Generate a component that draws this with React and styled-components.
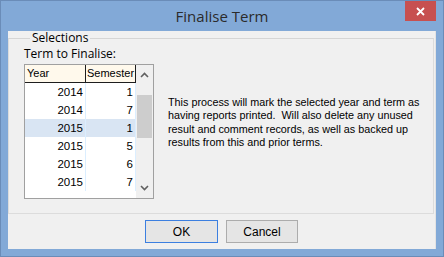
import React from "react";
import styled, { createGlobalStyle } from "styled-components";

const Global = createGlobalStyle`
  html, body {
    margin: 0;
    padding: 0;
    background: #ffffff;
  }
  body {
    font-family: "Liberation Sans", Arial, sans-serif;
    font-size: 11px;
    color: #000;
  }
`;

const Window = styled.div`
  box-sizing: border-box;
  width: 444px;
  height: 257px;
  display: flex;
  flex-direction: column;
  background: #82a9d7;
  border: 1px solid #6a8cb8;
  padding: 0 7px 7px 7px;
`;

const TitleBar = styled.div`
  height: 30px;
  display: grid;
  grid-template-columns: 1fr auto 1fr;
  align-items: start;
`;

const Title = styled.div`
  grid-column: 2;
  font-family: "Open Sans", "Noto Sans", sans-serif;
  font-size: 15px;
  line-height: 30px;
  color: #2b2b2b;
`;

const CloseButton = styled.div`
  grid-column: 3;
  justify-self: end;
  width: 31px;
  height: 20px;
  background: #c75050;
  color: #fff;
  display: flex;
  align-items: center;
  justify-content: center;
`;

const Client = styled.div`
  flex: 1;
  display: flex;
  flex-direction: column;
  background: #f0f0f0;
  border-right: 1px solid #e3e3e3;
`;

const Group = styled.fieldset`
  margin: 0 1px 0 0;
  padding: 1px 0 0 15px;
  height: 183px;
  box-sizing: border-box;
  border: 1px solid #dcdcdc;
  border-top-color: #d5d5d5;
`;

const Legend = styled.legend`
  padding: 0 2px;
  margin-left: 6px;
  font-family: "Open Sans", "Noto Sans", sans-serif;
  font-size: 12px;
  line-height: 14px;
`;

const Label = styled.div`
  font-family: "Open Sans", "Noto Sans", sans-serif;
  font-size: 12px;
  line-height: 14px;
  margin: 1px 0 3px 0;
`;

const Row = styled.div`
  display: flex;
  align-items: flex-start;
  gap: 13px;
`;

const ListBox = styled.div`
  width: 130px;
  height: 135px;
  box-sizing: border-box;
  border: 1px solid #a0a0a0;
  background: #fff;
  display: flex;
`;

const Grid = styled.div`
  width: 111px;
  display: flex;
  flex-direction: column;
`;

const HeaderRow = styled.div`
  display: flex;
  height: 17px;
  background: #fff9ec;
  border-bottom: 1px solid #1e1e1e;
`;

const HeadCell = styled.div`
  width: ${(p) => p.w}px;
  box-sizing: border-box;
  padding-left: ${(p) => p.pad}px;
  border-right: 1px solid #1e1e1e;
  font-size: 11px;
  line-height: 17px;
  white-space: nowrap;
  overflow: hidden;
`;

const DataRow = styled.div`
  display: flex;
  height: 18px;
  background: ${(p) => (p.selected ? "#d9e5f3" : "transparent")};
`;

const Cell = styled.div`
  width: ${(p) => p.w}px;
  box-sizing: border-box;
  padding-right: 2px;
  text-align: right;
  border-right: 1px solid #dbeeff;
  font-size: 11.5px;
  line-height: 18px;
`;

const ScrollBar = styled.div`
  width: 17px;
  background: #f0f0f0;
  display: flex;
  flex-direction: column;
  align-items: center;
`;

const Arrow = styled.div`
  height: 20px;
  width: 17px;
  display: flex;
  align-items: center;
  justify-content: center;
`;

const Track = styled.div`
  flex: 1;
  width: 15px;
  padding-top: 10px;
`;

const Thumb = styled.div`
  height: 43px;
  width: 15px;
  background: #cdcdcd;
`;

const Description = styled.div`
  margin-top: 32px;
  margin-left: 1px;
  white-space: pre-wrap;
  font-family: "Liberation Sans", Arial, sans-serif;
  font-size: 10.8px;
  line-height: 13.4px;
  color: #000;
`;

const Footer = styled.div`
  flex: 1;
  display: flex;
  justify-content: center;
  align-items: flex-start;
  gap: 8px;
  padding-top: 6px;
`;

const Button = styled.div`
  width: ${(p) => p.w}px;
  height: 23px;
  box-sizing: border-box;
  border: 1px solid ${(p) => (p.primary ? "#3c7fe0" : "#acacac")};
  background: #e5e5e5;
  display: flex;
  align-items: center;
  justify-content: center;
  font-family: "Liberation Sans", Arial, sans-serif;
  font-size: 12px;
`;

const terms = [
  { year: 2014, sem: 1 },
  { year: 2014, sem: 7 },
  { year: 2015, sem: 1, selected: true },
  { year: 2015, sem: 5 },
  { year: 2015, sem: 6 },
  { year: 2015, sem: 7 },
];

const Chevron = ({ down }) => (
  <svg width="9" height="6" viewBox="0 0 9 6">
    <path
      d={down ? "M1 1 L4.5 4.5 L8 1" : "M1 5 L4.5 1.5 L8 5"}
      fill="none"
      stroke="#606060"
      strokeWidth="1.6"
    />
  </svg>
);

export default function App() {
  return (
    <>
      <Global />
      <Window>
        <TitleBar>
          <Title>Finalise Term</Title>
          <CloseButton>
            <svg width="9" height="9" viewBox="0 0 9 9">
              <path d="M1 1 L8 8 M8 1 L1 8" stroke="#fff" strokeWidth="1.8" />
            </svg>
          </CloseButton>
        </TitleBar>
        <Client>
          <Group>
            <Legend>Selections</Legend>
            <Label>Term to Finalise:</Label>
            <Row>
              <ListBox>
                <Grid>
                  <HeaderRow>
                    <HeadCell w={61} pad={2}>
                      Year
                    </HeadCell>
                    <HeadCell w={50} pad={1}>
                      Semester
                    </HeadCell>
                  </HeaderRow>
                  {terms.map((t, i) => (
                    <DataRow key={i} selected={t.selected}>
                      <Cell w={61}>{t.year}</Cell>
                      <Cell w={50}>{t.sem}</Cell>
                    </DataRow>
                  ))}
                </Grid>
                <ScrollBar>
                  <Arrow>
                    <Chevron />
                  </Arrow>
                  <Track>
                    <Thumb />
                  </Track>
                  <Arrow>
                    <Chevron down />
                  </Arrow>
                </ScrollBar>
              </ListBox>
              <Description>
                {"This process will mark the selected year and term as\nhaving reports printed.  Will also delete any unused\nresult and comment records, as well as backed up\nresults from this and prior terms."}
              </Description>
            </Row>
          </Group>
          <Footer>
            <Button w={73} primary>
              OK
            </Button>
            <Button w={72}>Cancel</Button>
          </Footer>
        </Client>
      </Window>
    </>
  );
}
